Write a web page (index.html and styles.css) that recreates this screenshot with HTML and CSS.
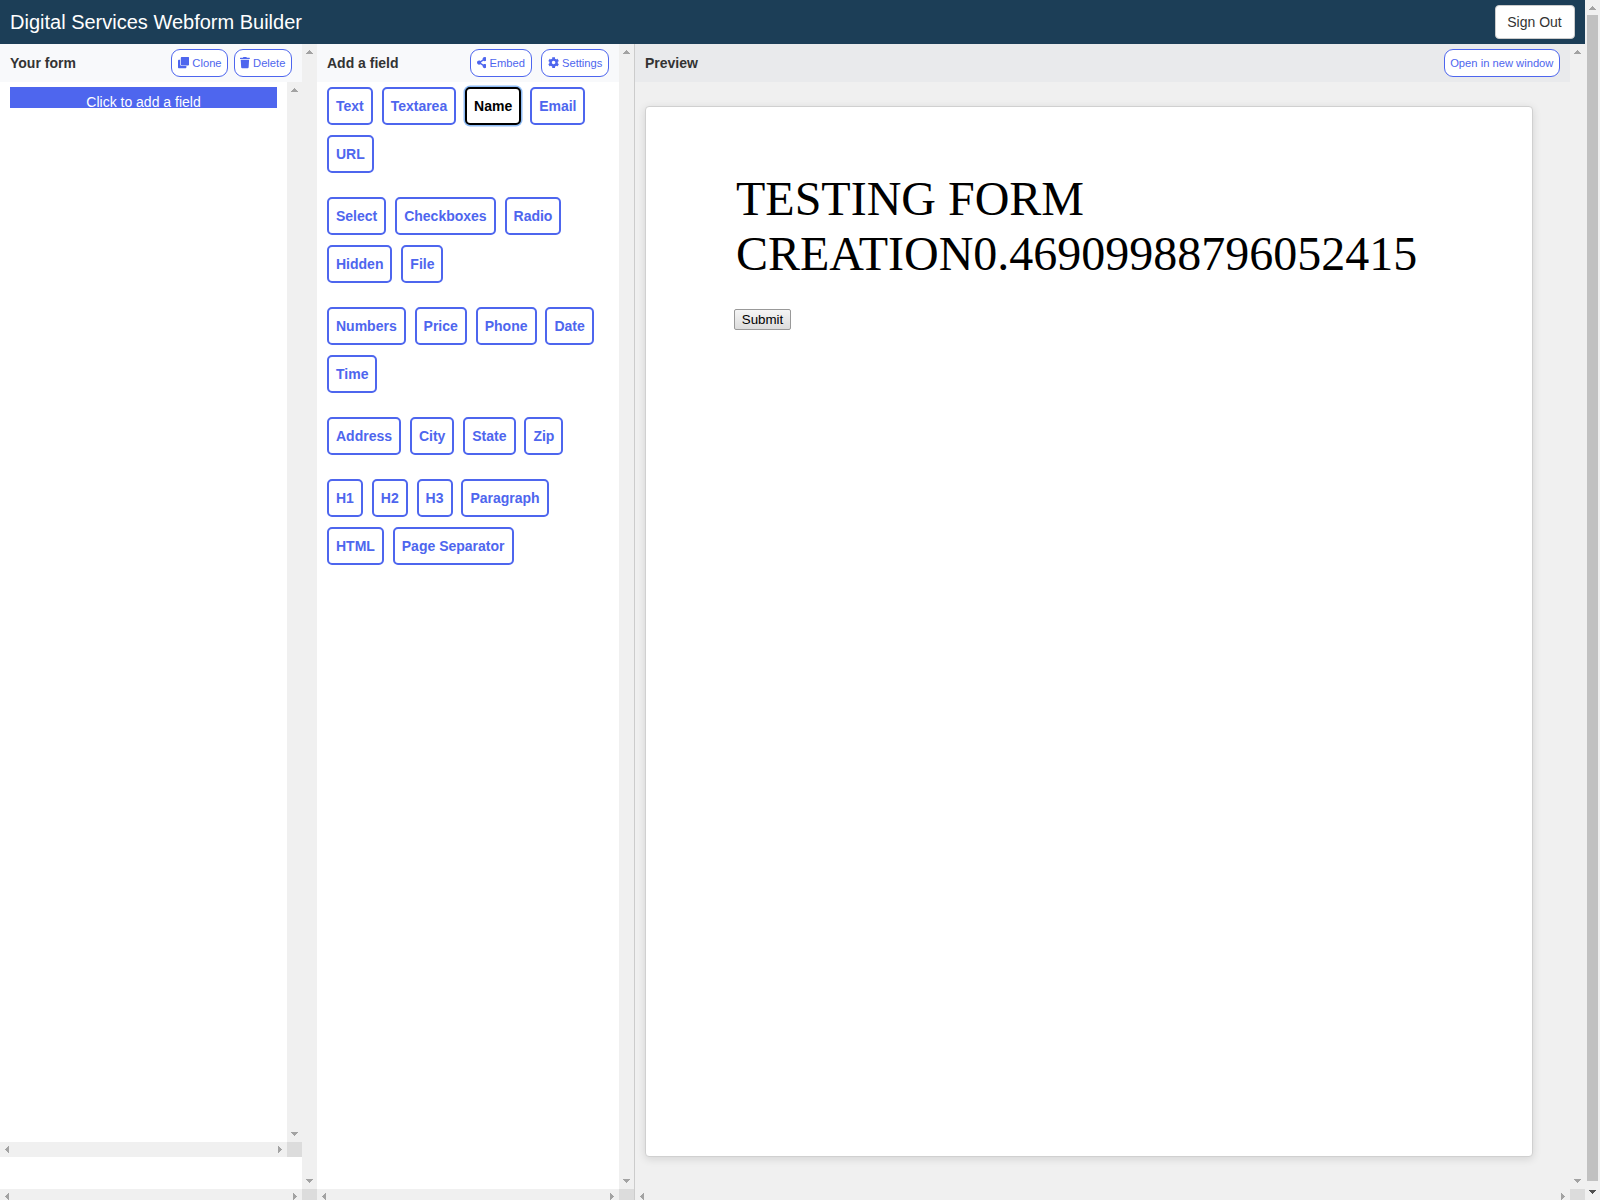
FILE: index.html
```html
<!DOCTYPE html>
<html lang="en">
<head>
<meta charset="utf-8">
<title>Digital Services Webform Builder</title>
<link rel="stylesheet" href="styles.css">
</head>
<body>
<svg class="defs" width="0" height="0">
  <symbol id="up" viewBox="0 0 7 4"><path d="M3 0h1v1h1v1h1v1h1v1H0V3h1V2h1V1h1z"/></symbol>
  <symbol id="down" viewBox="0 0 7 4"><path d="M3 4h1V3h1V2h1V1h1V0H0v1h1v1h1v1h1z"/></symbol>
  <symbol id="left" viewBox="0 0 4 7"><path d="M0 3v1h1v1h1v1h1v1h1V0H3v1H2v1H1v1z"/></symbol>
  <symbol id="right" viewBox="0 0 4 7"><path d="M4 3v1H3v1H2v1H1v1H0V0h1v1h1v1h1v1z"/></symbol>
</svg>
<div class="window">
  <div class="page">
    <header class="topbar">
      <h1 class="brand">Digital Services Webform Builder</h1>
      <button class="signout">Sign Out</button>
    </header>
    <main class="columns">
      <section class="panel panel-form">
        <div class="panel-body">
          <div class="panel-head">
            <h2>Your form</h2>
            <div class="actions">
              <button class="pill"><svg class="ico" viewBox="0 0 512 512"><path d="M464 0c26.510 0 48 21.490 48 48v288c0 26.510-21.490 48-48 48H176c-26.510 0-48-21.490-48-48V48c0-26.510 21.490-48 48-48h288M176 416c-44.112 0-80-35.888-80-80V128H48c-26.510 0-48 21.490-48 48v288c0 26.510 21.490 48 48 48h288c26.510 0 48-21.490 48-48v-48H176z"/></svg>Clone</button>
              <button class="pill"><svg class="ico narrow" viewBox="0 0 448 512"><path d="M432 32H312l-9.400-18.700A24 24 0 0 0 281.100 0H166.800a23.720 23.720 0 0 0-21.400 13.300L136 32H16A16 16 0 0 0 0 48v32a16 16 0 0 0 16 16h416a16 16 0 0 0 16-16V48a16 16 0 0 0-16-16zM53.200 467a48 48 0 0 0 47.900 45h245.800a48 48 0 0 0 47.900-45L416 128H32z"/></svg>Delete</button>
            </div>
          </div>
          <div class="fieldlist">
            <div class="fieldlist-body"><div class="add-strip">Click to add a field</div></div>
            <div class="vbar"><svg width="7" height="4"><use href="#up"/></svg><svg width="7" height="4"><use href="#down"/></svg></div>
            <div class="hbar"><svg width="4" height="7"><use href="#left"/></svg><svg width="4" height="7"><use href="#right"/></svg></div>
            <div class="corner"></div>
          </div>
        </div>
        <div class="vbar"><svg width="7" height="4"><use href="#up"/></svg><svg width="7" height="4"><use href="#down"/></svg></div>
        <div class="hbar"><svg width="4" height="7"><use href="#left"/></svg><svg width="4" height="7"><use href="#right"/></svg></div>
        <div class="corner"></div>
      </section>

      <section class="panel panel-add">
        <div class="panel-body">
          <div class="panel-head">
            <h2>Add a field</h2>
            <div class="actions wide">
              <button class="pill"><svg class="ico narrow" viewBox="0 0 448 512"><path d="M352 320c-22.608 0-43.387 7.819-59.790 20.895l-102.486-64.054a96.551 96.551 0 0 0 0-41.683l102.486-64.054C308.613 184.181 329.392 192 352 192c53.019 0 96-42.981 96-96S405.019 0 352 0s-96 42.981-96 96c0 7.158.790 14.130 2.276 20.841L155.790 180.895C139.387 167.819 118.608 160 96 160c-53.019 0-96 42.981-96 96s42.981 96 96 96c22.608 0 43.387-7.819 59.790-20.895l102.486 64.054A96.301 96.301 0 0 0 256 416c0 53.019 42.981 96 96 96s96-42.981 96-96-42.981-96-96-96z"/></svg>Embed</button>
              <button class="pill"><svg class="ico" viewBox="0 0 512 512"><path d="M487.400 315.700l-42.600-24.600c4.300-23.200 4.300-47 0-70.200l42.600-24.600c4.900-2.800 7.100-8.600 5.500-14-11.100-35.600-30-67.800-54.700-94.600-3.800-4.100-10-5.100-14.800-2.300L380.800 110c-17.900-15.400-38.500-27.300-60.800-35.100V25.800c0-5.600-3.900-10.500-9.400-11.700-36.700-8.200-74.300-7.800-109.200 0-5.500 1.200-9.400 6.100-9.400 11.700V75c-22.200 7.900-42.800 19.800-60.800 35.100L88.700 85.500c-4.900-2.800-11-1.900-14.800 2.300-24.700 26.700-43.600 58.900-54.700 94.600-1.700 5.400.600 11.200 5.500 14L67.300 221c-4.300 23.200-4.300 47 0 70.200l-42.600 24.600c-4.900 2.800-7.100 8.600-5.500 14 11.100 35.600 30 67.800 54.700 94.600 3.800 4.100 10 5.100 14.800 2.300l42.600-24.600c17.900 15.400 38.500 27.300 60.800 35.100v49.200c0 5.600 3.900 10.500 9.400 11.700 36.700 8.200 74.300 7.800 109.200 0 5.500-1.200 9.400-6.100 9.400-11.700v-49.200c22.200-7.900 42.800-19.800 60.800-35.100l42.600 24.600c4.900 2.800 11 1.900 14.800-2.300 24.700-26.700 43.600-58.900 54.700-94.600 1.500-5.500-.700-11.300-5.600-14.100zM256 336c-44.100 0-80-35.900-80-80s35.900-80 80-80 80 35.900 80 80-35.900 80-80 80z"/></svg>Settings</button>
            </div>
          </div>
          <div class="groups">
            <div class="group">
              <button class="field">Text</button>
              <button class="field">Textarea</button>
              <button class="field focused">Name</button>
              <button class="field">Email</button>
              <button class="field">URL</button>
            </div>
            <div class="group">
              <button class="field">Select</button>
              <button class="field">Checkboxes</button>
              <button class="field">Radio</button>
              <button class="field">Hidden</button>
              <button class="field">File</button>
            </div>
            <div class="group">
              <button class="field">Numbers</button>
              <button class="field">Price</button>
              <button class="field">Phone</button>
              <button class="field">Date</button>
              <button class="field">Time</button>
            </div>
            <div class="group">
              <button class="field">Address</button>
              <button class="field">City</button>
              <button class="field">State</button>
              <button class="field">Zip</button>
            </div>
            <div class="group">
              <button class="field">H1</button>
              <button class="field">H2</button>
              <button class="field">H3</button>
              <button class="field">Paragraph</button>
              <button class="field">HTML</button>
              <button class="field">Page Separator</button>
            </div>
          </div>
        </div>
        <div class="vbar"><svg width="7" height="4"><use href="#up"/></svg><svg width="7" height="4"><use href="#down"/></svg></div>
        <div class="hbar"><svg width="4" height="7"><use href="#left"/></svg><svg width="4" height="7"><use href="#right"/></svg></div>
        <div class="corner"></div>
      </section>

      <section class="panel panel-preview">
        <div class="panel-body">
          <div class="panel-head">
            <h2>Preview</h2>
            <button class="pill">Open in new window</button>
          </div>
          <div class="sheet">
            <h3 class="form-title">TESTING FORM CREATION0.46909988796052415</h3>
            <button class="submit">Submit</button>
          </div>
        </div>
        <div class="vbar"><svg width="7" height="4"><use href="#up"/></svg><svg width="7" height="4"><use href="#down"/></svg></div>
        <div class="hbar"><svg width="4" height="7"><use href="#left"/></svg><svg width="4" height="7"><use href="#right"/></svg></div>
        <div class="corner"></div>
      </section>
    </main>
  </div>
  <div class="vbar page-bar"><svg width="7" height="4"><use href="#up"/></svg><div class="thumb"></div><svg class="dark" width="7" height="4"><use href="#down"/></svg></div>
</div>
</body>
</html>
```
FILE: styles.css
```css
* { box-sizing: border-box; }

html, body {
  margin: 0;
  height: 1200px;
  overflow: hidden;
}

body {
  font-family: "Liberation Sans", Arial, sans-serif;
  font-size: 14px;
  color: #333;
  background: #fff;
}

button { font-family: inherit; margin: 0; }

.defs { display: none; }

.window { display: flex; height: 1200px; overflow: hidden; }
.page { flex: 1; display: flex; flex-direction: column; }

.topbar {
  flex: none;
  height: 44px;
  display: flex;
  align-items: center;
  justify-content: space-between;
  padding: 0 10px;
  background: #1c3e57;
}
.brand { margin: 0; font-size: 20px; font-weight: 400; color: #fff; }
.signout {
  width: 80px;
  height: 34px;
  padding: 0 1px 0 0;
  border: 1px solid #ccc;
  border-radius: 4px;
  background: #fff;
  color: #333;
  font-size: 14px;
}

.columns {
  flex: none;
  height: 1160px;
  display: grid;
  grid-template-columns: 317px 317px 1fr;
}
.panel {
  display: grid;
  grid-template: minmax(0, 1fr) 15px / minmax(0, 1fr) 15px;
  background: #fff;
}
.panel-preview { background: #f0f0f0; border-left: 1px solid #ccc; }

.panel-head {
  height: 38px;
  display: flex;
  align-items: center;
  justify-content: space-between;
  padding: 0 10px;
  background: #f8f9fb;
}
.panel-preview .panel-head { background: #e9eaec; }
.panel-head h2 { margin: 0; font-size: 14px; font-weight: 700; }

.actions { display: flex; gap: 5.4px; }
.actions.wide { gap: 9.6px; }
.pill {
  height: 28px;
  display: flex;
  align-items: center;
  gap: 3.1px;
  padding: 0 5.6px;
  border: 1px solid #4e66ee;
  border-radius: 9px;
  background: #fff;
  color: #4e66ee;
  font-size: 11.2px;
  white-space: nowrap;
}
.ico { width: 11.2px; height: 11.2px; fill: currentColor; }
.ico.narrow { width: 9.8px; }

/* scrollbars */
.vbar, .hbar {
  display: flex;
  align-items: center;
  justify-content: space-between;
  background: #f0f0f0;
  fill: #a3a3a3;
  shape-rendering: crispEdges;
}
.vbar { width: 15px; flex-direction: column; padding: 6px 0; }
.hbar { height: 15px; padding: 0 5px; }
.corner { background: #dcdcdc; }
.page-bar { flex: none; height: 1200px; justify-content: flex-start; }
.thumb { width: 11px; height: 1166px; margin: 5px 0 9px; background: #c1c1c1; }
.dark { fill: #505050; }

.fieldlist {
  height: 1075px;
  display: grid;
  grid-template: minmax(0, 1fr) 15px / minmax(0, 1fr) 15px;
}
.fieldlist-body { padding: 5px 10px; }
.add-strip {
  height: 21px;
  padding-top: 7px;
  line-height: 16px;
  text-align: center;
  color: #fff;
  background: #4e66ee;
}

.groups { padding: 5px 10px; }
.group { margin-bottom: 14px; font-size: 14px; }
.field {
  height: 38px;
  margin: 0 5px 10px 0;
  padding: 0 7px;
  border: 2px solid #4e66ee;
  border-radius: 5px;
  background: #fff;
  color: #4e66ee;
  font-size: 14px;
  font-weight: 700;
  vertical-align: top;
}
.focused {
  border-color: #000;
  color: #000;
  box-shadow: 0 0 0 1.5px #8fbcf5;
}

.sheet {
  width: 888px;
  height: 1051px;
  margin: 24px 0 0 10px;
  padding: 64px 88px;
  border: 1px solid #d0d0d0;
  border-radius: 4px;
  background: #fff;
  box-shadow: 0 2px 8px rgba(0, 0, 0, .12);
}
.form-title {
  margin: 0 0 28px;
  padding-left: 2px;
  color: #000;
  font: 400 48px/55px "Liberation Serif", "Times New Roman", serif;
}
.submit {
  display: block;
  width: 57px;
  height: 21px;
  padding: 0;
  border: 1px solid #999;
  border-radius: 2px;
  background: linear-gradient(#f5f5f5, #dcdcdc);
  color: #000;
  font-size: 13.333px;
}
```
